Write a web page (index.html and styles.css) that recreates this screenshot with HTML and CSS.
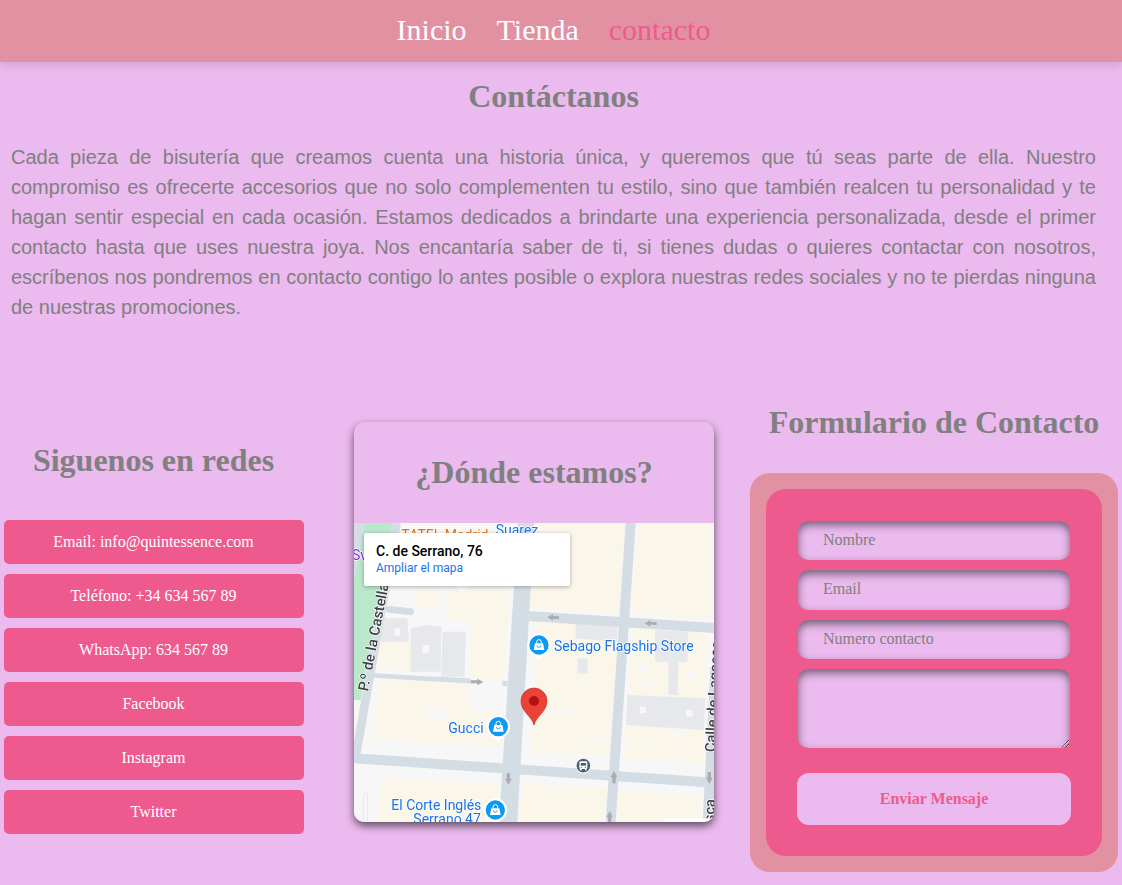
FILE: index.html
```html
<!DOCTYPE html>
<html lang="es">
<head>
<meta charset="utf-8">
<title>Contacto</title>
<link rel="stylesheet" href="styles.css">
</head>
<body>
<header class="topbar">
  <nav class="nav">
    <a class="nav-link" href="#">Inicio</a>
    <a class="nav-link" href="#">Tienda</a>
    <a class="nav-link nav-link-active" href="#">contacto</a>
  </nav>
</header>
<section class="intro">
  <h1 class="title">Contáctanos</h1>
  <p class="lead">Cada pieza de bisutería que creamos cuenta una historia única, y queremos que tú seas parte de ella. Nuestro compromiso es ofrecerte accesorios que no solo complementen tu estilo, sino que también realcen tu personalidad y te hagan sentir especial en cada ocasión. Estamos dedicados a brindarte una experiencia personalizada, desde el primer contacto hasta que uses nuestra joya. Nos encantaría saber de ti, si tienes dudas o quieres contactar con nosotros, escríbenos nos pondremos en contacto contigo lo antes posible o explora nuestras redes sociales y no te pierdas ninguna de nuestras promociones.</p>
</section>
<main class="columns">
  <section class="social">
    <h2 class="heading social-heading">Siguenos en redes</h2>
    <div class="social-list">
      <a class="social-btn" href="#">Email: info@quintessence.com</a>
      <a class="social-btn" href="#">Teléfono: +34 634 567 89</a>
      <a class="social-btn" href="#">WhatsApp: 634 567 89</a>
      <a class="social-btn" href="#">Facebook</a>
      <a class="social-btn" href="#">Instagram</a>
      <a class="social-btn" href="#">Twitter</a>
    </div>
  </section>
  <section class="map-card">
    <h2 class="heading map-heading">¿Dónde estamos?</h2>
    <div class="map">
      <svg class="map-svg" viewBox="0 39 1080 897" width="360" height="299" xmlns="http://www.w3.org/2000/svg">
        <rect x="0" y="39" width="1080" height="897" fill="#f7f7f7"/>
        <polygon points="30,39 115,39 20,570 0,570 0,200" fill="#b9e8ca"/>
        <polygon points="0,39 30,39 0,200" fill="#d5dde4"/>
        <g fill="#faf6ea">
          <polygon points="70,395 170,400 170,480 65,475"/>
          <polygon points="80,505 345,522 345,600 440,610 440,712 55,688"/>
          <polygon points="350,280 460,285 450,510 345,510"/>
          <polygon points="285,240 465,240 462,335 280,330"/>
          <polygon points="185,240 255,240 252,290 185,290"/>
          <polygon points="550,335 790,350 765,735 530,730"/>
          <polygon points="835,355 1060,370 1045,760 810,745"/>
          <polygon points="530,39 810,39 795,310 525,295"/>
          <polygon points="850,39 1080,39 1080,325 830,315"/>
          <polygon points="80,800 435,825 425,936 70,936"/>
          <polygon points="510,820 760,835 745,936 490,936"/>
          <polygon points="790,840 1045,860 1040,936 775,936"/>
        </g>
        <g fill="#f7f7f7">
          <rect x="853" y="465" width="30" height="20"/>
          <rect x="848" y="520" width="35" height="15"/>
          <rect x="993" y="485" width="30" height="20"/>
          <rect x="953" y="660" width="35" height="20"/>
          <rect x="868" y="700" width="35" height="10"/>
          <rect x="560" y="420" width="40" height="18"/>
          <rect x="610" y="600" width="45" height="14"/>
          <rect x="700" y="680" width="40" height="14"/>
          <rect x="220" y="600" width="60" height="30"/>
        </g>
        <g fill="#e7e8ec">
          <polygon points="90,325 160,325 165,395 80,395"/>
          <polygon points="170,355 220,345 262,350 260,485 170,485"/>
          <polygon points="265,365 335,365 332,500 262,500"/>
          <polygon points="665,335 790,345 790,395 665,385"/>
          <polygon points="903,360 1003,365 1000,455 973,455 971,555 943,555 943,455 903,455"/>
          <polygon points="820,555 1053,565 1050,660 816,645"/>
          <polygon points="670,445 700,445 700,490 670,490"/>
        </g>
        <g fill="#f7f7f7">
          <rect x="205" y="405" width="20" height="25"/>
          <rect x="120" y="355" width="18" height="22"/>
          <rect x="858" y="590" width="18" height="20"/>
          <rect x="996" y="600" width="20" height="20"/>
        </g>
        <polygon points="492,39 541,39 490,936 435,936" fill="#d5dde4"/>
        <g fill="none" stroke="#d5dde4" stroke-linecap="butt">
          <path d="M830 39 L770 936" stroke-width="30"/>
          <path d="M1085 470 L1062 936" stroke-width="32"/>
          <path d="M128 39 L5 740" stroke-width="26"/>
          <path d="M520 318 L1080 354" stroke-width="30"/>
          <path d="M0 745 L1080 818" stroke-width="30"/>
          <path d="M40 495 L250 508" stroke-width="14"/>
          <path d="M250 507 L350 513" stroke-width="15"/>
          <path d="M445 520 L460 521" stroke-width="15"/>
          <path d="M105 298 L170 305" stroke-width="20" stroke-linecap="round"/>
        </g>
        <g fill="#a9adb1">
          <polygon points="580,322 597,312 597,318 615,319 615,328 597,327 597,332"/>
          <polygon points="872,340 889,330 889,336 908,337 908,345 889,344 889,350"/>
          <polygon points="388,516 370,506 370,511 350,511 350,520 370,520 370,526"/>
          <polygon points="463,825 453,806 458,806 458,790 468,790 468,806 473,806"/>
          <polygon points="780,783 770,802 775,802 775,820 785,820 785,802 790,802"/>
          <polygon points="1066,822 1056,803 1061,803 1061,786 1071,786 1071,803 1076,803"/>
          <polygon points="767,903 757,922 762,922 762,936 772,936 772,922 777,922"/>
        </g>
        <g>
          <text x="142" y="90" fill="#e8710a" class="map-text">TATEL Madrid</text>
          <text x="425" y="74" class="map-text map-blue">Suarez</text>
          <text x="-6" y="150" fill="#8430ce" class="map-text">Sv</text>
          <text x="600" y="423" class="map-text map-blue">Sebago Flagship Store</text>
          <text x="283" y="669" class="map-text map-blue">Gucci</text>
          <text x="112" y="900" class="map-text map-blue">El Corte Inglés</text>
          <text x="178" y="941" class="map-text map-blue">Serrano 47</text>
          <text transform="translate(42 545) rotate(-79)" class="map-text map-road">P.º de la Castellana</text>
          <text transform="translate(1084 727) rotate(-87)" class="map-text map-road">Calle de Lagasca</text>
          <text transform="translate(1080 937) rotate(-87)" class="map-text map-road">sca</text>
        </g>
        <g>
          <path d="M323 245 L295 218 H351 Z" fill="#fff"/>
          <circle cx="323" cy="197" r="34" fill="#a142f4" stroke="#fff" stroke-width="6"/>
        </g>
        <g>
          <path d="M555 449 L524 420 H586 Z" fill="#fff"/>
          <circle cx="555" cy="405" r="32" fill="#0b9bf5" stroke="#fff" stroke-width="6"/>
          <path d="M543 400 H567 L571 420 H539 Z" fill="#fff"/>
          <path d="M548 400 V396 A7 7 0 0 1 562 396 V400" fill="none" stroke="#fff" stroke-width="3"/>
          <path d="M549 406 A6 6 0 0 0 561 406" fill="none" stroke="#0b9bf5" stroke-width="2.5"/>
        </g>
        <g>
          <path d="M433 695 L402 666 H464 Z" fill="#fff"/>
          <circle cx="433" cy="650" r="32" fill="#0b9bf5" stroke="#fff" stroke-width="6"/>
          <path d="M421 645 H445 L449 665 H417 Z" fill="#fff"/>
          <path d="M426 645 V641 A7 7 0 0 1 440 641 V645" fill="none" stroke="#fff" stroke-width="3"/>
          <path d="M427 651 A6 6 0 0 0 439 651" fill="none" stroke="#0b9bf5" stroke-width="2.5"/>
        </g>
        <g>
          <path d="M424 945 L393 916 H455 Z" fill="#fff"/>
          <circle cx="424" cy="900" r="32" fill="#0b9bf5" stroke="#fff" stroke-width="6"/>
          <path d="M412 895 H436 L440 915 H408 Z" fill="#fff"/>
          <path d="M417 895 V891 A7 7 0 0 1 431 891 V895" fill="none" stroke="#fff" stroke-width="3"/>
          <path d="M418 901 A6 6 0 0 0 430 901" fill="none" stroke="#0b9bf5" stroke-width="2.5"/>
        </g>
        <g>
          <circle cx="688" cy="767" r="22" fill="#47607a" stroke="#fff" stroke-width="3"/>
          <rect x="676" y="754" width="24" height="23" rx="4" fill="#fff"/>
          <rect x="680" y="759" width="16" height="8" fill="#47607a"/>
          <rect x="678" y="777" width="5" height="4" fill="#fff"/>
          <rect x="693" y="777" width="5" height="4" fill="#fff"/>
          <circle cx="682" cy="772" r="2" fill="#47607a"/>
          <circle cx="694" cy="772" r="2" fill="#47607a"/>
        </g>
        <g>
          <path d="M540 645 C535 620 501 605 501 573 A39 39 0 0 1 579 573 C579 605 545 620 540 645 Z" fill="#ea4335" stroke="#c5221f" stroke-width="2"/>
          <circle cx="540" cy="573" r="15" fill="#b31412"/>
        </g>
        <rect x="28" y="847" width="12" height="89" rx="5" fill="#f7f7f7" stroke="#e3e3e3" stroke-width="2"/>
        <rect x="930" y="925" width="150" height="11" fill="#fff"/>
      </svg>
      <div class="map-info">
        <div class="map-info-title">C. de Serrano, 76</div>
        <a class="map-info-link" href="#">Ampliar el mapa</a>
      </div>
    </div>
  </section>
  <section class="contact">
    <h2 class="heading contact-heading">Formulario de Contacto</h2>
    <div class="form-frame">
      <form class="form">
        <input class="field" type="text" placeholder="Nombre">
        <input class="field" type="email" placeholder="Email">
        <input class="field" type="tel" placeholder="Numero contacto">
        <textarea class="field field-area"></textarea>
        <button class="send" type="button">Enviar Mensaje</button>
      </form>
    </div>
  </section>
</main>
</body>
</html>
```

FILE: styles.css
```css
* {
  box-sizing: border-box;
}

html,
body {
  margin: 0;
  padding: 0;
}

body {
  background: #ebbaee;
  font-family: "Liberation Serif", "Times New Roman", serif;
  color: #808080;
  height: 885px;
  overflow: hidden;
}

.topbar {
  height: 62px;
  background: #e291a2;
  box-shadow: 0 4px 8px rgba(0, 0, 0, 0.1);
  padding-right: 15px;
  padding-bottom: 2px;
  display: flex;
  align-items: center;
  justify-content: center;
}

.nav {
  display: flex;
  gap: 30px;
}

.nav-link {
  color: #fff;
  font-size: 30px;
  text-decoration: none;
}

.nav-link-active {
  color: #ee5a8d;
}

.intro {
  width: 1107px;
  padding: 0 11px;
}

.title {
  margin: 16px 0 0;
  font-size: 32px;
  line-height: 37px;
  font-weight: bold;
  text-align: center;
}

.lead {
  margin: 27px 0 0;
  font-family: "Liberation Sans", Arial, sans-serif;
  font-size: 20px;
  line-height: 30px;
  text-align: justify;
}

.columns {
  display: flex;
  align-items: flex-start;
  margin-top: 100px;
  padding-left: 4px;
}

.heading {
  margin: 0;
  font-size: 32px;
  line-height: 37px;
  font-weight: bold;
  text-align: center;
}

.social {
  width: 300px;
  margin-top: 20px;
}

.social-heading {
  padding-right: 1px;
}

.social-list {
  display: flex;
  flex-direction: column;
  gap: 10px;
  margin-top: 41px;
}

.social-btn {
  display: flex;
  align-items: center;
  justify-content: center;
  height: 44px;
  padding-right: 1px;
  background: #ee5a8d;
  border-radius: 5px;
  color: #fff;
  font-size: 16px;
  text-decoration: none;
}

.map-card {
  width: 360px;
  height: 400px;
  margin-left: 50px;
  border-radius: 10px;
  overflow: hidden;
  box-shadow: 0 4px 8px rgba(0, 0, 0, 0.6);
}

.map-heading {
  padding: 32px 0;
  height: 101px;
}

.map {
  position: relative;
  height: 299px;
  overflow: hidden;
}

.map-svg {
  display: block;
  filter: blur(0.35px);
}

.map-text {
  font-family: Roboto, "Noto Sans", sans-serif;
  font-size: 42px;
  paint-order: stroke;
  stroke: #fff;
  stroke-width: 4px;
  stroke-linejoin: round;
}

.map-blue {
  fill: #1a73e8;
}

.map-road {
  fill: #3c4043;
  font-weight: 500;
  font-size: 44px;
}

.map-info {
  position: absolute;
  left: 10px;
  top: 10px;
  width: 206px;
  height: 53px;
  padding: 9px 12px;
  background: #fff;
  box-shadow: 0 1px 4px rgba(0, 0, 0, 0.3);
  border-radius: 2px;
  font-family: Roboto, "Noto Sans", sans-serif;
}

.map-info-title {
  font-size: 14px;
  line-height: 18px;
  font-weight: 500;
  color: #000;
}

.map-info-link {
  display: block;
  font-size: 12px;
  line-height: 16px;
  color: #1a73e8;
  text-decoration: none;
}

.contact {
  width: 368px;
  margin-left: 36px;
  margin-top: -18px;
}

.contact-heading {
  height: 36px;
}

.form-frame {
  margin-top: 33px;
  padding: 16px;
  height: 399px;
  background: #e291a2;
  border-radius: 20px;
}

.form {
  height: 367px;
  padding: 31.5px 31px 0 31px;
  background: #ee5a8d;
  border-radius: 20px;
  display: flex;
  flex-direction: column;
  align-items: center;
}

.field {
  display: block;
  width: 272px;
  height: 39.5px;
  margin-bottom: 10px;
  padding: 0 25px 1px;
  flex: none;
  border: 0;
  outline: 0;
  border-radius: 10px;
  background: #ebbaee;
  box-shadow: inset 0 4px 8px rgba(0, 0, 0, 0.5);
  font-family: "Liberation Serif", "Times New Roman", serif;
  font-size: 16px;
  color: #808080;
}

.field::placeholder {
  color: #808080;
  opacity: 1;
}

.field-area {
  height: 79px;
  margin-bottom: 25px;
  padding-top: 10px;
}

.send {
  display: block;
  width: 274px;
  height: 52px;
  flex: none;
  border: 0;
  border-radius: 12px;
  background: #ebbaee;
  color: #ee5a8d;
  font-family: "Liberation Serif", "Times New Roman", serif;
  font-size: 16px;
  font-weight: bold;
}
```
